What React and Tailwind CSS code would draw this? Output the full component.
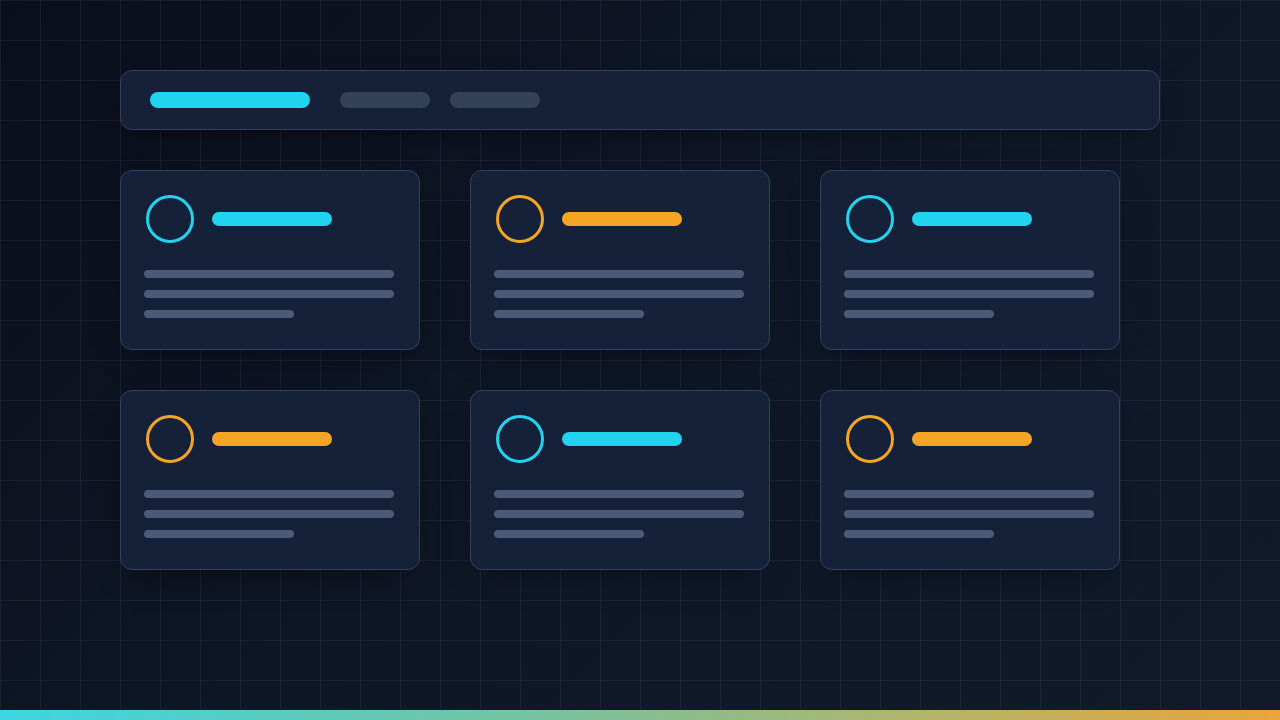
import React from "react";

const cards = [
  { accent: "cyan" },
  { accent: "amber" },
  { accent: "cyan" },
  { accent: "amber" },
  { accent: "cyan" },
  { accent: "amber" },
];

function Card({ accent }) {
  const ring = accent === "cyan" ? "border-[#22d3ee]" : "border-[#f5a524]";
  const pill = accent === "cyan" ? "bg-[#22d3ee]" : "bg-[#f5a524]";
  return (
    <div className="w-[300px] h-[180px] rounded-xl border border-[#34425d] bg-[#152039] pl-[23px] pt-[24px] shadow-[0_10px_30px_-12px_rgba(0,0,0,0.6)]">
      {/* Header */}
      <div className="flex items-center gap-[18px] pl-[2px]">
        <div className={"w-[48px] h-[48px] rounded-full border-[3px] " + ring} />
        <div className={"w-[120px] h-[14px] rounded-full " + pill} />
      </div>
      {/* Lines */}
      <div className="mt-[27px] flex flex-col gap-[12px]">
        <div className="w-[250px] h-[8px] rounded-full bg-[#4d5a77]" />
        <div className="w-[250px] h-[8px] rounded-full bg-[#4d5a77]" />
        <div className="w-[150px] h-[8px] rounded-full bg-[#4d5a77]" />
      </div>
    </div>
  );
}

export default function App() {
  return (
    <div className="relative w-[1280px] h-[720px] overflow-hidden bg-[linear-gradient(135deg,#0a0f1c_0%,#0f1727_55%,#111a2b_100%)]">
      {/* Grid */}
      <div className="absolute inset-0 bg-[linear-gradient(to_right,rgba(148,163,184,0.09)_1px,transparent_1px),linear-gradient(to_bottom,rgba(148,163,184,0.09)_1px,transparent_1px)] bg-[size:40px_40px]" />

      <div className="relative flex flex-col h-full pl-[120px] pt-[70px]">
        {/* Top bar */}
        <div className="w-[1040px] h-[60px] rounded-xl border border-[#34425d] bg-[#162039] flex items-center gap-[30px] pl-[29px] shadow-[0_10px_30px_-12px_rgba(0,0,0,0.6)]">
          <div className="w-[160px] h-[16px] rounded-full bg-[#22d3ee]" />
          <div className="flex gap-[20px]">
            <div className="w-[90px] h-[16px] rounded-full bg-[#334159]" />
            <div className="w-[90px] h-[16px] rounded-full bg-[#334159]" />
          </div>
        </div>

        {/* Cards */}
        <div className="mt-[40px] grid grid-cols-[300px_300px_300px] gap-x-[50px] gap-y-[40px]">
          {cards.map((c, i) => (
            <Card key={i} accent={c.accent} />
          ))}
        </div>

        <div className="flex-1" />
      </div>

      {/* Bottom accent strip */}
      <div className="absolute left-0 right-0 bottom-0 h-[10px] bg-[linear-gradient(to_right,#3dd6e4,#7cc29a_45%,#e9a53a)]" />
    </div>
  );
}
